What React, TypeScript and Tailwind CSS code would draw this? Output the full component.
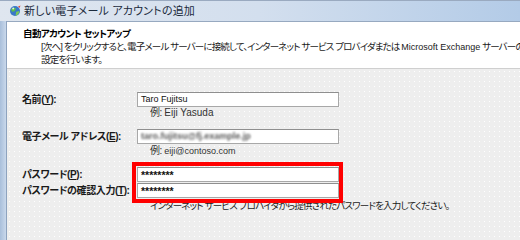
import React from "react";

const JP = "font-['Liberation_Sans','Noto_Sans_CJK_JP',sans-serif]";

function U({ c }: { c: string }) {
  return <span className="underline underline-offset-1">{c}</span>;
}

function Box({ children }: { children?: React.ReactNode }) {
  return (
    <div className="w-[202px] h-[15px] bg-white border border-[#a8a8a8] border-t-[#8f8f8f] flex items-center pl-[3px] text-[9px] leading-none text-[#111]">
      {children}
    </div>
  );
}

export default function App() {
  return (
    <div
      className={`w-[520px] h-[240px] overflow-hidden flex flex-col bg-[#c7d7ea] ${JP} text-[10px] text-[#1a1a1a] [font-feature-settings:'palt'] tracking-[-0.4px]`}
    >
      {/* title bar */}
      <div className="h-[21px] shrink-0 flex items-center border-t border-[#9aaac0] bg-gradient-to-r from-[#dfe6ef] via-[#d3dfee] to-[#b3cbe7]">
        <svg width="12" height="12" viewBox="0 0 12 12" className="ml-[9px] mr-[3px]">
          <circle cx="6" cy="6" r="5" fill="#3a78c8" />
          <path d="M2 4.5 C3.5 2.5 5.5 2.2 7 3.4 L5.6 6.2 L3 6.8 Z" fill="#5fbf4a" />
          <path d="M7.2 6.8 L10.4 6 C10.2 8.4 8.6 10.2 6.6 10.8 Z" fill="#7cc957" />
          <circle cx="4.2" cy="3.6" r="1" fill="#ffffff" opacity="0.8" />
          <path d="M9 1.5 L11.5 0.5 L10.6 3 Z" fill="#e04a3a" />
        </svg>
        <span className="text-[11px] text-[#1b2a3c] tracking-[0.2px]">新しい電子メール アカウントの追加</span>
      </div>

      <div className="flex-1 flex min-h-0">
        {/* left frame */}
        <div className="w-[7px] shrink-0 bg-gradient-to-r from-[#a9bfdb] to-[#c9d8eb] border-r border-[#8ea3bf]" />

        <div className="flex-1 flex flex-col min-w-0 border-t border-[#97a9c0]">
          {/* header */}
          <div className="h-[47px] shrink-0 bg-white border-b border-[#cfcfcf] pl-[16px] pt-[6px] overflow-hidden whitespace-nowrap">
            <div className="font-bold leading-[12px] h-[12px] text-black text-[9.5px] tracking-[-0.6px]">
              自動アカウント セットアップ
            </div>
            <div className="pl-[18px] leading-[13px] h-[13px] text-[9.5px] tracking-[-0.85px]">
              [次へ] をクリックすると、電子メール サーバーに接続して、インターネット サービス プロバイダまたは{" "}
              <span className="text-[9px] tracking-normal">Microsoft Exchange</span> サーバーの
            </div>
            <div className="pl-[18px] leading-[13px] h-[13px] text-[9.5px] tracking-[-0.8px]">設定を行います。</div>
          </div>

          {/* content */}
          <div className="flex-1 bg-[#eeeeee] bg-[radial-gradient(circle,#ffffff_0.6px,transparent_0.9px)] bg-[length:5px_5px] pl-[15px] pt-[23px]">
            <div className="flex items-center h-[15px]">
              <div className="w-[115px] font-bold">
                名前(<U c="Y" />):
              </div>
              <Box>
                <span className="tracking-normal">Taro Fujitsu</span>
              </Box>
            </div>
            <div className="pl-[128px] h-[12px] leading-[12px] text-[#333]">
              例: <span className="text-[10px] tracking-normal">Eiji Yasuda</span>
            </div>

            <div className="flex items-center h-[15px] mt-[10px]">
              <div className="w-[115px] font-bold whitespace-nowrap">
                電子メール アドレス(<U c="E" />):
              </div>
              <Box>
                <span className="blur-[1.3px] text-[#5a5a5a] font-bold tracking-normal">taro.fujitsu@fj.example.jp</span>
              </Box>
            </div>
            <div className="pl-[128px] h-[12px] leading-[12px] mt-[1px] text-[#333]">
              例: <span className="text-[9px] tracking-normal">eiji@contoso.com</span>
            </div>

            <div className="flex mt-[10px]">
              <div className="w-[115px] flex flex-col gap-[1px] font-bold whitespace-nowrap">
                <div className="h-[15px] flex items-center">
                  パスワード(<U c="P" />):
                </div>
                <div className="h-[15px] flex items-center">
                  パスワードの確認入力(<U c="T" />):
                </div>
              </div>
              <div className="relative flex flex-col gap-[1px]">
                <Box>
                  <span className="tracking-normal font-bold text-[10.5px] pt-[2px]">********</span>
                </Box>
                <Box>
                  <span className="tracking-normal font-bold text-[10.5px] pt-[2px]">********</span>
                </Box>
              </div>
            </div>
            <div className="relative pl-[128px] h-[12px] leading-[12px] mt-[2px] whitespace-nowrap text-[9.5px] tracking-[-0.8px]">
              インターネット サービス プロバイダから提供されたパスワードを入力してください。
              <div className="absolute left-[110px] -top-[38px] w-[211px] h-[41px] border-[4px] border-[#ff0000]" />
            </div>
          </div>
        </div>
      </div>
    </div>
  );
}
